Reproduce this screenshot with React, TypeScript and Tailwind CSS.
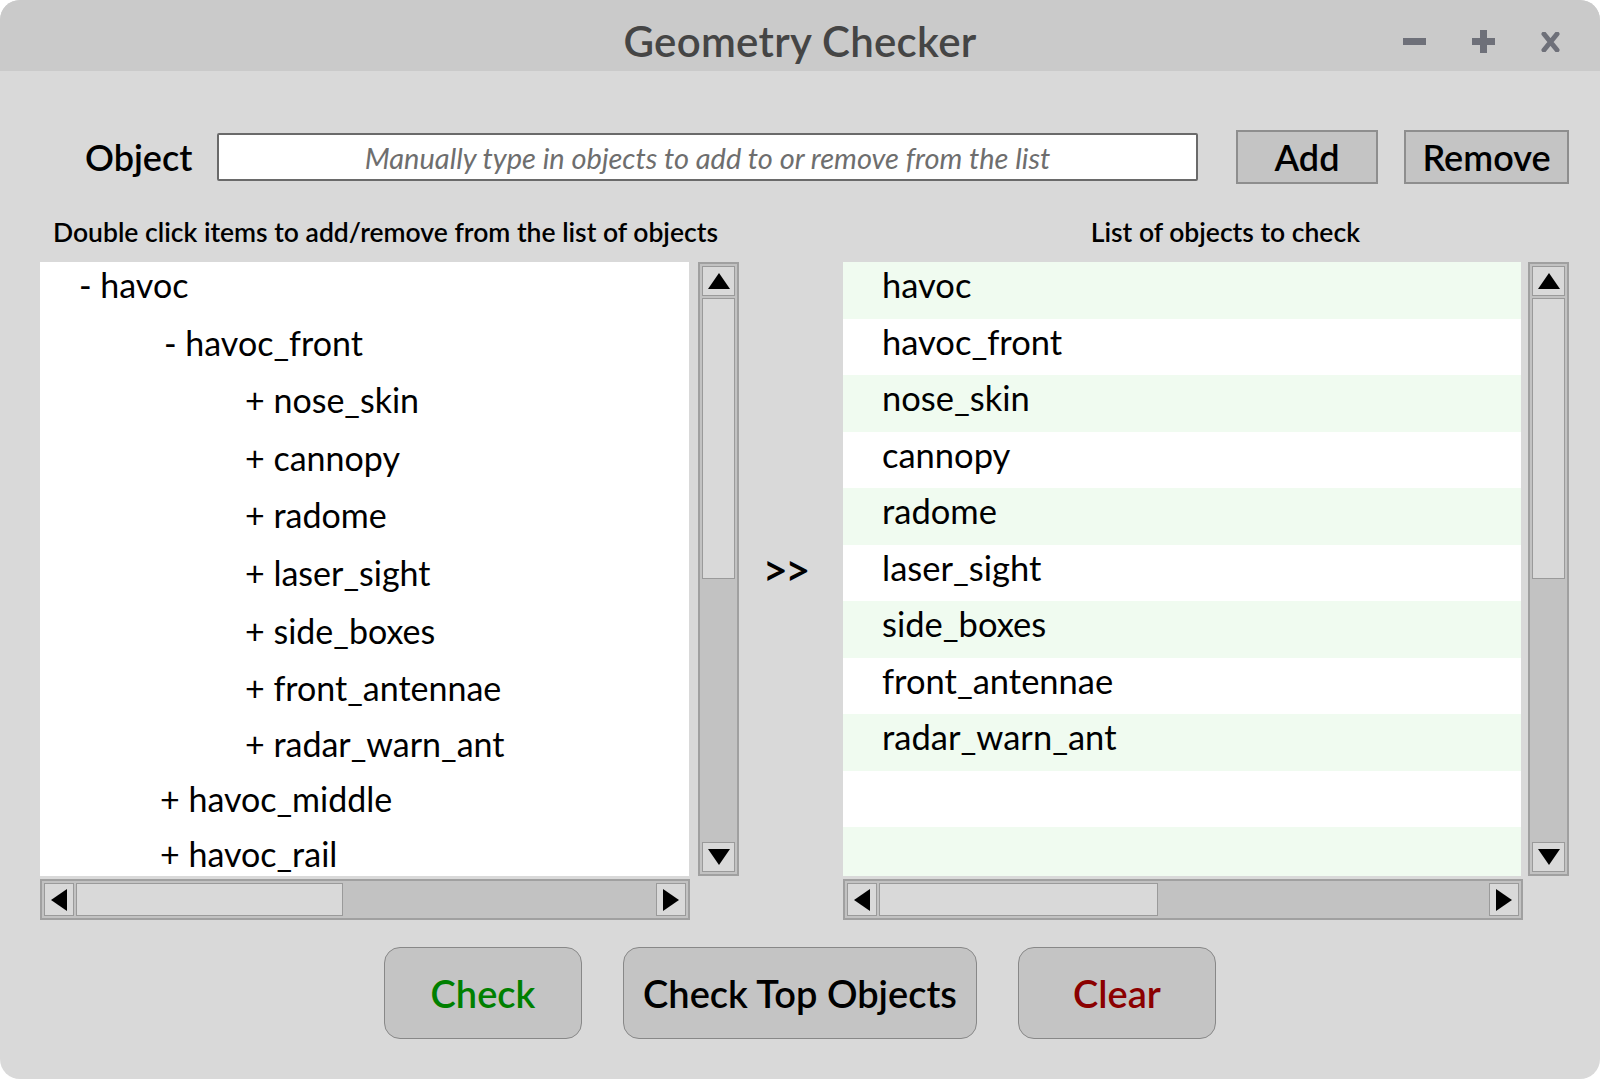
import React from 'react';

const treeItems = [
  { label: '- havoc', pad: 'pl-[39px]', h: 'h-[57px]' },
  { label: '- havoc_front', pad: 'pl-[124px]', h: 'h-[58px]' },
  { label: '+ nose_skin', pad: 'pl-[205px]', h: 'h-[57px]' },
  { label: '+ cannopy', pad: 'pl-[205px]', h: 'h-[58px]' },
  { label: '+ radome', pad: 'pl-[205px]', h: 'h-[57px]' },
  { label: '+ laser_sight', pad: 'pl-[205px]', h: 'h-[58px]' },
  { label: '+ side_boxes', pad: 'pl-[205px]', h: 'h-[58px]' },
  { label: '+ front_antennae', pad: 'pl-[205px]', h: 'h-[57px]' },
  { label: '+ radar_warn_ant', pad: 'pl-[205px]', h: 'h-[55px]' },
  { label: '+ havoc_middle', pad: 'pl-[120px]', h: 'h-[54px]' },
  { label: '+ havoc_rail', pad: 'pl-[120px]', h: 'h-[57px]' },
];

const checkList = [
  'havoc',
  'havoc_front',
  'nose_skin',
  'cannopy',
  'radome',
  'laser_sight',
  'side_boxes',
  'front_antennae',
  'radar_warn_ant',
  '',
  '',
];

const Arrow = ({ dir }: { dir: 'up' | 'down' | 'left' | 'right' }) => {
  const points = {
    up: '0,16 11,0 22,16',
    down: '0,0 22,0 11,16',
    left: '16,0 16,22 0,11',
    right: '0,0 16,11 0,22',
  }[dir];
  const vertical = dir === 'up' || dir === 'down';
  return (
    <svg width={vertical ? 22 : 16} height={vertical ? 16 : 22} viewBox={vertical ? '0 0 22 16' : '0 0 16 22'}>
      <polygon points={points} fill="#000" />
    </svg>
  );
};

const VScroll = () => (
  <div className="w-[41px] h-[614px] border-2 border-[#a0a0a0] bg-[#c2c2c2] p-[2px] flex flex-col">
    <div className="h-[30px] shrink-0 border border-[#9a9a9a] bg-[#d9d9d9] flex items-center justify-center">
      <Arrow dir="up" />
    </div>
    <div className="flex-1 py-[2px] flex flex-col">
      <div className="h-[281px] border border-[#9a9a9a] bg-[#d9d9d9]" />
    </div>
    <div className="h-[30px] shrink-0 border border-[#9a9a9a] bg-[#d9d9d9] flex items-center justify-center">
      <Arrow dir="down" />
    </div>
  </div>
);

const HScroll = ({ width, thumb }: { width: string; thumb: string }) => (
  <div className={`${width} h-[41px] border-2 border-[#a0a0a0] bg-[#c2c2c2] p-[2px] flex`}>
    <div className="w-[30px] shrink-0 border border-[#9a9a9a] bg-[#d9d9d9] flex items-center justify-center">
      <Arrow dir="left" />
    </div>
    <div className="flex-1 px-[2px] flex">
      <div className={`${thumb} border border-[#9a9a9a] bg-[#d9d9d9]`} />
    </div>
    <div className="w-[30px] shrink-0 border border-[#9a9a9a] bg-[#d9d9d9] flex items-center justify-center">
      <Arrow dir="right" />
    </div>
  </div>
);

const App: React.FC = () => {
  return (
    <div className="w-[1600px] h-[1079px] bg-white font-['Lato','Liberation_Sans',sans-serif] text-black">
      <div className="w-full h-full rounded-[20px] overflow-hidden bg-[#d9d9d9] flex flex-col">
        {/* Title bar */}
        <div className="relative h-[71px] shrink-0 bg-[#cacaca] flex items-center justify-center pt-[10px]">
          <span className="text-[42px] font-semibold text-[#454545] tracking-[0.3px] leading-none">Geometry Checker</span>
          <div className="absolute right-[40px] top-[6px] h-full flex items-center gap-[46px]">
            <svg width="23" height="23" viewBox="0 0 23 23">
              <rect x="0" y="8" width="23" height="7" fill="#6e7079" />
            </svg>
            <svg width="23" height="23" viewBox="0 0 23 23">
              <rect x="0" y="8" width="23" height="7" fill="#6e7079" />
              <rect x="8" y="0" width="7" height="23" fill="#6e7079" />
            </svg>
            <svg width="19" height="20" viewBox="0 0 19 20">
              <path d="M3 2 L16 18 M16 2 L3 18" stroke="#6e7079" strokeWidth="5" strokeLinecap="round" />
            </svg>
          </div>
        </div>

        {/* Object input row */}
        <div className="mt-[59px] h-[54px] flex items-center pl-[85px]">
          <span className="w-[132px] text-[36px] font-semibold leading-none">Object</span>
          <div className="w-[981px] h-[48px] bg-white border-2 border-[#6a6a6a] rounded-[2px] flex items-center justify-center">
            <span className="text-[29px] italic text-[#6e6e6e] leading-none">Manually type in objects to add to or remove from the list</span>
          </div>
          <button className="ml-[38px] w-[142px] h-[54px] bg-[#c4c4c4] border-2 border-[#8e8e8e] text-[36px] font-semibold leading-none">
            Add
          </button>
          <button className="ml-[26px] w-[165px] h-[54px] bg-[#c4c4c4] border-2 border-[#8e8e8e] text-[36px] font-semibold leading-none">
            Remove
          </button>
        </div>

        {/* Labels */}
        <div className="mt-[30px] h-[36px] flex items-center">
          <span className="ml-[53px] text-[26.5px] font-semibold leading-none">Double click items to add/remove from the list of objects</span>
          <span className="ml-auto mr-[240px] text-[26.5px] font-semibold leading-none">List of objects to check</span>
        </div>

        {/* Panels */}
        <div className="mt-[12px] flex">
          {/* Left tree */}
          <div className="ml-[40px] flex flex-col gap-[3px]">
            <div className="flex gap-[9px]">
              <div className="w-[649px] h-[614px] bg-white overflow-hidden">
                {treeItems.map((item) => (
                  <div key={item.label} className={`${item.h} ${item.pad} pb-[11px] flex items-center text-[34px] leading-none whitespace-nowrap`}>
                    {item.label}
                  </div>
                ))}
              </div>
              <VScroll />
            </div>
            <HScroll width="w-[650px]" thumb="w-[267px]" />
          </div>

          {/* Arrow */}
          <div className="w-[104px] h-[614px] flex items-center justify-center pr-[12px]">
            <span className="text-[44px] font-semibold leading-none tracking-[-3px]">&gt;&gt;</span>
          </div>

          {/* Right list */}
          <div className="flex flex-col gap-[3px]">
            <div className="flex gap-[7px]">
              <div className="w-[678px] h-[614px] bg-white overflow-hidden">
                {checkList.map((name, i) => (
                  <div
                    key={i}
                    className={`h-[56.5px] pl-[39px] pb-[10px] flex items-center text-[34.5px] leading-none ${i % 2 === 0 ? 'bg-[#f0fbf0]' : 'bg-white'}`}
                  >
                    {name}
                  </div>
                ))}
              </div>
              <VScroll />
            </div>
            <HScroll width="w-[680px]" thumb="w-[279px]" />
          </div>
        </div>

        {/* Bottom buttons */}
        <div className="mt-[27px] flex justify-center gap-[41px]">
          <button className="w-[198px] h-[92px] rounded-[16px] bg-[#c4c4c4] border border-[#888] text-[38px] font-semibold text-[#008000]">
            Check
          </button>
          <button className="w-[354px] h-[92px] rounded-[16px] bg-[#c4c4c4] border border-[#888] text-[38px] font-semibold text-black">
            Check Top Objects
          </button>
          <button className="w-[198px] h-[92px] rounded-[16px] bg-[#c4c4c4] border border-[#888] text-[38px] font-semibold text-[#8b0000]">
            Clear
          </button>
        </div>
      </div>
    </div>
  );
};

export default App;
